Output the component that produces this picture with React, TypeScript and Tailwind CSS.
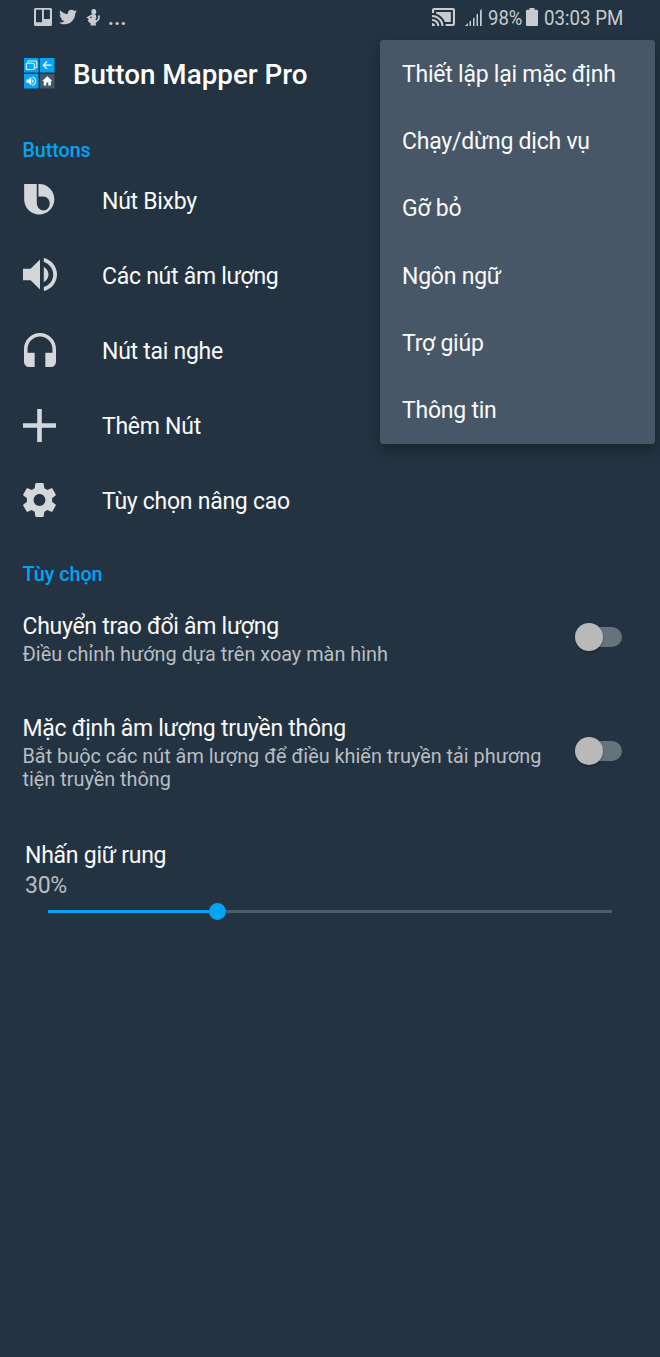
import type { ReactNode } from "react";
import { FaTwitter } from "react-icons/fa";

const GEAR =
  "M19.43 12.98c.04-.32.07-.64.07-.98s-.03-.66-.07-.98l2.11-1.65c.19-.15.24-.42.12-.64l-2-3.46c-.12-.22-.39-.3-.61-.22l-2.49 1c-.52-.4-1.08-.73-1.69-.98l-.38-2.65C14.46 2.18 14.25 2 14 2h-4c-.25 0-.46.18-.49.42l-.38 2.65c-.61.25-1.17.59-1.69.98l-2.49-1c-.23-.09-.49 0-.61.22l-2 3.46c-.13.22-.07.49.12.64l2.11 1.65c-.04.32-.07.65-.07.98s.03.66.07.98l-2.11 1.65c-.19.15-.24.42-.12.64l2 3.46c.12.22.39.3.61.22l2.49-1c.52.4 1.08.73 1.69.98l.38 2.65c.03.24.24.42.49.42h4c.25 0 .46-.18.49-.42l.38-2.65c.61-.25 1.17-.59 1.69-.98l2.49 1c.23.09.49 0 .61-.22l2-3.46c.12-.22.07-.49-.12-.64l-2.11-1.65zM12 15.5c-1.93 0-3.5-1.57-3.5-3.5s1.57-3.5 3.5-3.5 3.5 1.57 3.5 3.5-1.57 3.5-3.5 3.5z";
const VOLUME =
  "M3 9v6h4l5 5V4L7 9H3zm13.5 3c0-1.77-1.02-3.29-2.5-4.03v8.05c1.48-.73 2.5-2.25 2.5-4.02zM14 3.23v2.06c2.89.86 5 3.54 5 6.71s-2.11 5.85-5 6.71v2.06c4.01-.91 7-4.49 7-8.77s-2.99-7.86-7-8.77z";
const HEADSET =
  "M12 1c-4.97 0-9 4.03-9 9v7c0 1.66 1.34 3 3 3h3v-8H5v-2c0-3.87 3.13-7 7-7s7 3.13 7 7v2h-4v8h3c1.66 0 3-1.34 3-3v-7c0-4.97-4.03-9-9-9z";
const CAST =
  "M1 18v3h3c0-1.66-1.34-3-3-3zm0-4v2c2.76 0 5 2.24 5 5h2c0-3.87-3.13-7-7-7zm18-7H5v1.63c3.96 1.28 7.09 4.41 8.37 8.37H19V7zM1 10v2c4.97 0 9 4.03 9 9h2c0-6.08-4.93-11-11-11zm20-7H3c-1.1 0-2 .9-2 2v3h2V5h18v14h-7v2h7c1.1 0 2-.9 2-2V5c0-1.1-.9-2-2-2z";

function StatusBar() {
  return (
    <div className="flex h-9 items-start pl-[34px] text-[#c8ccd0]">
      <svg className="mt-2 h-[18px] w-[18px] shrink-0" viewBox="0 0 18 18" fill="currentColor">
        <path fillRule="evenodd" d="M1.5 0h15A1.5 1.5 0 0 1 18 1.500v15a1.500 1.500 0 0 1-1.500 1.500h-15A1.500 1.500 0 0 1 0 16.500v-15A1.500 1.500 0 0 1 1.500 0zM2 1.800v12.400h6V1.800zM9.900 1.800v9.200h6V1.800z" />
      </svg>
      <FaTwitter className="mt-2 ml-[7px] h-[18px] w-[18px] shrink-0" />
      <svg className="mt-2 ml-[9px] h-[18px] w-[15px] shrink-0" viewBox="0 0 15 18" fill="currentColor">
        <circle cx="7.800" cy="3.800" r="2.500" />
        <path d="M6 2.500l.8-1.600 2.200.3 1 1.800zM5.300 6.500q2.400-1 4.500.2l.6 3-1 1.600q1.600 1.400 1 3.200l-1 1.200 1 1.700H4.200l.8-1.700q-2-.8-3.300-3.200l1.600-1.700q1.200 0 2.500-1.400z" />
        <path d="M5.800 7.200L2 9.600l2.800 1.700M9.800 13.500q4-1.700 3-6" fill="none" stroke="currentColor" strokeWidth="1.700" />
      </svg>
      <span className="mt-[6px] ml-[7px] text-[20px] leading-[24px] font-bold tracking-[0.500px]">...</span>
      <svg className="mt-2 ml-auto h-[18px] w-[23px] shrink-0" viewBox="1 3 22 18" preserveAspectRatio="none" fill="currentColor">
        <path d={CAST} />
      </svg>
      <svg className="mt-[9px] ml-[10px] h-[17px] w-[17px] shrink-0" viewBox="0 0 17 17" fill="currentColor">
        <path d="M0 17L3 14v3zM4.500 12.500l1.500-1V17H4.500zM8 9.500l1.500-1V17H8zM11.500 5.500l1.500-1V17h-1.500zM15 1.500L16.700 0v17H15z" />
      </svg>
      <span className="mt-[6px] ml-[6px] w-[38px]">
        <span className="inline-block origin-left scale-x-[0.880] text-[21px] leading-[24px] whitespace-nowrap">98%</span>
      </span>
      <svg className="mt-2 h-[18px] w-[12px] shrink-0" viewBox="0 0 12 18" fill="currentColor">
        <path d="M3.500 0h5v1.800h2.500a1 1 0 0 1 1 1V17a1 1 0 0 1-1 1H1a1 1 0 0 1-1-1V2.800a1 1 0 0 1 1-1h2.500z" />
      </svg>
      <span className="mt-[6px] ml-[6px] w-[116px]">
        <span className="inline-block origin-left scale-x-[0.890] text-[21px] leading-[24px] whitespace-nowrap">03:03 PM</span>
      </span>
    </div>
  );
}

function AppLogo() {
  return (
    <svg className="mb-[1px] h-[31px] w-[31px] shrink-0" viewBox="0 0 31 31">
      <path d="M0 0h14.500v14.500H0zM16 0h14.500v14.500H16zM0 16h14.500v14.500H0z" fill="#03a4f3" />
      <path d="M16 16h14.500v14.500H16z" fill="#44566b" />
      <g fill="none" stroke="#e8f6ff" strokeWidth="1.100">
        <rect x="2.300" y="5.200" width="8" height="6.300" rx="1" />
        <path d="M4 5V3.800q0-.8.800-.800H12q.800 0 .800.800v5q0 .800-.800.800h-1.500" />
      </g>
      <path d="M27.500 7.200h-8M23 3.500l-3.700 3.700 3.700 3.700" fill="none" stroke="#fff" strokeWidth="1.300" />
      <g transform="translate(.8 16.700) scale(.54)" fill="#fff"><path d={VOLUME} /></g>
      <path d="M23.300 18.300l-5.100 4.700h1.500v4.500h2.600v-3h2v3h2.600V23h1.500z" fill="#fff" />
    </svg>
  );
}

function ButtonRow({ icon, label }: { icon: ReactNode; label: string }) {
  return (
    <li className="flex h-[75.200px] items-center pl-[22px]">
      <span className="mb-[2px] flex w-[35px] justify-center text-[#d3d7da]">{icon}</span>
      <span className="ml-[45px] pt-[2px] text-[23px] leading-[28px] tracking-[-0.270px]">{label}</span>
    </li>
  );
}

function Toggle() {
  return (
    <span className="relative mb-[1px] flex h-7 w-[47px] shrink-0 items-center">
      <span className="ml-3 h-5 w-[35px] rounded-full bg-[#66727c]" />
      <span className="absolute top-0 left-0 h-7 w-7 rounded-full bg-[#b9b9b9] shadow-[0_1px_2px_rgba(0,0,0,0.350)]" />
    </span>
  );
}

function SwitchRow({ title, detail }: { title: string; detail: string }) {
  return (
    <div className="flex items-center justify-between pr-[38px] pl-[22.500px]">
      <div className="w-[530px] pt-[3px]">
        <p className="text-[23px] leading-[28px] tracking-[-0.280px]">{title}</p>
        <p className="mt-[2px] text-[19.850px] leading-[23px] text-[#b9bec3]">{detail}</p>
      </div>
      <Toggle />
    </div>
  );
}

const MENU = ["Thiết lập lại mặc định", "Chạy/dừng dịch vụ", "Gỡ bỏ", "Ngôn ngữ", "Trợ giúp", "Thông tin"];

function OverflowMenu() {
  return (
    <ul className="absolute top-[39.500px] left-[379.500px] w-[275px] rounded-[3px] bg-[#475767] shadow-[0_6px_14px_rgba(0,0,0,0.300)]">
      {MENU.map((item) => (
        <li key={item} className="flex h-[67.350px] items-center pt-[3px] pl-[22.500px] text-[23px] leading-[28px] tracking-[-0.230px]">
          {item}
        </li>
      ))}
    </ul>
  );
}

export default function App() {
  return (
    <div className="relative flex h-[1357px] w-[660px] flex-col overflow-hidden bg-[#233341] font-['Roboto',sans-serif] text-[#fafafa]">
      <StatusBar />
      <header className="flex h-[76px] items-center pl-6">
        <AppLogo />
        <h1 className="ml-[18px] pt-[2px] text-[27.800px] leading-[40px] font-medium text-white">Button Mapper Pro</h1>
      </header>
      <h2 className="h-[51px] pt-[27px] pl-[22.500px] text-[19.600px] leading-6 font-medium text-[#03a4f3]">Buttons</h2>
      <ul>
        <ButtonRow
          label="Nút Bixby"
          icon={
            <svg className="h-[30.500px] w-[30.500px]" viewBox="75 163 91 92" fill="currentColor">
              <path fillRule="evenodd" d="M75 163h38v53c0 16 8 27 20 27 11 0 19-9 19-21s-8-21-20-21h-14v-38h2a46 46 0 0 1 0 92a45 46 0 0 1-45-46z" />
            </svg>
          }
        />
        <ButtonRow
          label="Các nút âm lượng"
          icon={<svg className="h-[33px] w-[34px]" viewBox="3 3.230 18 17.540" preserveAspectRatio="none" fill="currentColor"><path d={VOLUME} /></svg>}
        />
        <ButtonRow
          label="Nút tai nghe"
          icon={<svg className="h-[34px] w-[32px]" viewBox="3 1 18 19" preserveAspectRatio="none" fill="currentColor"><path d={HEADSET} /></svg>}
        />
        <ButtonRow
          label="Thêm Nút"
          icon={<svg className="h-[33px] w-[33px]" viewBox="0 0 33 33" fill="currentColor"><path d="M14.200 0h4.600v14.200H33v4.600H18.800V33h-4.600V18.800H0v-4.600h14.200z" /></svg>}
        />
        <ButtonRow
          label="Tùy chọn nâng cao"
          icon={<svg className="h-[34px] w-[33px]" viewBox="2.200 2 19.600 20" preserveAspectRatio="none" fill="currentColor"><path d={GEAR} /></svg>}
        />
      </ul>
      <h2 className="mt-[24.500px] pl-[22.500px] text-[19.700px] leading-6 font-medium text-[#03a4f3]">Tùy chọn</h2>
      <div className="mt-[22.500px] flex flex-col gap-[46px]">
        <SwitchRow title="Chuyển trao đổi âm lượng" detail="Điều chỉnh hướng dựa trên xoay màn hình" />
        <SwitchRow title="Mặc định âm lượng truyền thông" detail="Bắt buộc các nút âm lượng để điều khiển truyền tải phương tiện truyền thông" />
      </div>
      <div className="mt-[51px] pl-[25px]">
        <p className="text-[23px] leading-[28px] tracking-[-0.250px]">Nhấn giữ rung</p>
        <p className="mt-[2px] text-[23px] leading-[28px] tracking-[-0.250px] text-[#b9bec3]">30%</p>
        <div className="mt-[3px] ml-[23px] flex h-[17px] w-[564px] items-center">
          <span className="h-[3px] w-[160.500px] bg-[#03a4f3]" />
          <span className="h-[17px] w-[17px] rounded-full bg-[#03a4f3]" />
          <span className="h-[3px] flex-1 bg-[#505d68]" />
        </div>
      </div>
      <OverflowMenu />
    </div>
  );
}
